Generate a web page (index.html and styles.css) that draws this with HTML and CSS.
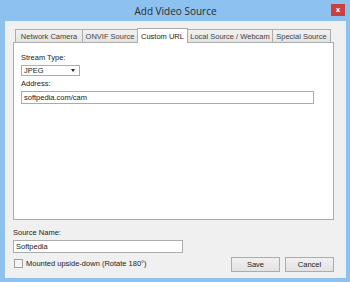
FILE: index.html
```html
<!DOCTYPE html>
<html lang="en">
<head>
  <meta charset="UTF-8">
  <title>Add Video Source</title>
  <link rel="stylesheet" href="styles.css">
</head>
<body>
  <div class="window">
    <div class="titlebar">
      <span class="title">Add Video Source</span>
      <button class="close-btn">x</button>
    </div>

    <div class="client">
      <!-- Tabs -->
      <div class="tabs">
        <div class="tab tab-network">Network Camera</div>
        <div class="tab tab-onvif">ONVIF Source</div>
        <div class="tab tab-custom active">Custom URL</div>
        <div class="tab tab-local">Local Source / Webcam</div>
        <div class="tab tab-special">Special Source</div>
      </div>

      <div class="tab-panel">
        <label class="field-label">Stream Type:</label>
        <div class="select">
          <span>JPEG</span>
          <span class="arrow"></span>
        </div>
        <label class="field-label">Address:</label>
        <div class="input focused">softpedia.com/cam</div>
      </div>

      <!-- Bottom -->
      <label class="field-label name-label">Source Name:</label>
      <div class="input name-input">Softpedia</div>

      <div class="footer">
        <div class="check-row">
          <span class="checkbox"></span>
          <span>Mounted upside-down (Rotate 180°)</span>
        </div>
        <div class="buttons">
          <button class="btn">Save</button>
          <button class="btn">Cancel</button>
        </div>
      </div>
    </div>
  </div>
</body>
</html>
```

FILE: styles.css
```css
/* General */
body {
  margin: 0;
  padding: 0;
  font-family: "Liberation Sans", Arial, sans-serif;
  font-size: 7.5px;
  color: #222;
}

.window {
  width: 350px;
  height: 282px;
  background: #8dc2f0;
  box-sizing: border-box;
  padding: 0 4px 4px 5px;
  display: flex;
  flex-direction: column;
}

/* Title bar */
.titlebar {
  height: 21px;
  position: relative;
  display: flex;
  justify-content: center;
  align-items: center;
}

.title {
  font-family: "Open Sans", "DejaVu Sans", sans-serif;
  font-size: 10px;
  color: #2b2b2b;
}

.close-btn {
  position: absolute;
  right: 1px;
  top: 4px;
  width: 14px;
  height: 12px;
  border: none;
  padding: 0;
  background: #c9403f;
  color: white;
  font-size: 7px;
  font-weight: bold;
  font-family: "DejaVu Sans", sans-serif;
  line-height: 12px;
}

/* Client area */
.client {
  flex-grow: 1;
  background: #f0f0f0;
  padding: 7px 12px 0 8px;
  display: flex;
  flex-direction: column;
}

.tabs {
  display: flex;
  padding-left: 2px;
  height: 14px;
  align-items: flex-end;
}

.tab {
  height: 13px;
  box-sizing: border-box;
  border: 1px solid #acacac;
  border-bottom: none;
  margin-right: -1px;
  background: linear-gradient(#f2f2f2, #e3e3e3);
  color: #444;
  display: flex;
  align-items: center;
  justify-content: center;
  white-space: nowrap;
}

.tab-network { width: 68px; }
.tab-onvif { width: 56px; }
.tab-custom { width: 51px; }
.tab-local { width: 86px; }
.tab-special { width: 59px; }

.tab.active {
  height: 15px;
  background: white;
  color: #222;
  position: relative;
  margin-bottom: -1px;
  z-index: 1;
}

.tab-panel {
  height: 178px;
  box-sizing: border-box;
  background: white;
  border: 1px solid #acacac;
  padding: 10px 19px 0 7px;
  display: flex;
  flex-direction: column;
}

.field-label {
  display: block;
  color: #222;
  line-height: 10px;
  margin-bottom: 2px;
}

.select {
  width: 59px;
  height: 11px;
  box-sizing: border-box;
  border: 1px solid #acacac;
  background: white;
  display: flex;
  justify-content: space-between;
  align-items: center;
  padding: 0 4px 0 2px;
  margin-bottom: 3px;
}

.arrow {
  width: 0;
  height: 0;
  border-left: 2.5px solid transparent;
  border-right: 2.5px solid transparent;
  border-top: 3px solid #222;
}

.input {
  height: 13px;
  box-sizing: border-box;
  border: 1px solid #acacac;
  background: white;
  padding: 0 2px;
  display: flex;
  align-items: center;
}

.input.focused {
  border-color: #7eb4ea;
}

.name-label {
  margin-top: 8px;
}

.name-input {
  width: 170px;
}

/* Footer */
.footer {
  display: flex;
  justify-content: space-between;
  align-items: center;
  margin-top: 4px;
}

.check-row {
  display: flex;
  align-items: center;
  gap: 3px;
  padding-left: 1px;
  margin-top: -2px;
}

.checkbox {
  width: 9px;
  height: 9px;
  box-sizing: border-box;
  border: 1px solid #a0a0a0;
  background: #f4f4f4;
}

.buttons {
  display: flex;
  gap: 5px;
}

.btn {
  width: 49px;
  height: 15px;
  padding: 0;
  border: 1px solid #acacac;
  background: linear-gradient(#f0f0f0, #e3e3e3);
  font-family: "Liberation Sans", Arial, sans-serif;
  font-size: 7.5px;
  color: #222;
}
```
